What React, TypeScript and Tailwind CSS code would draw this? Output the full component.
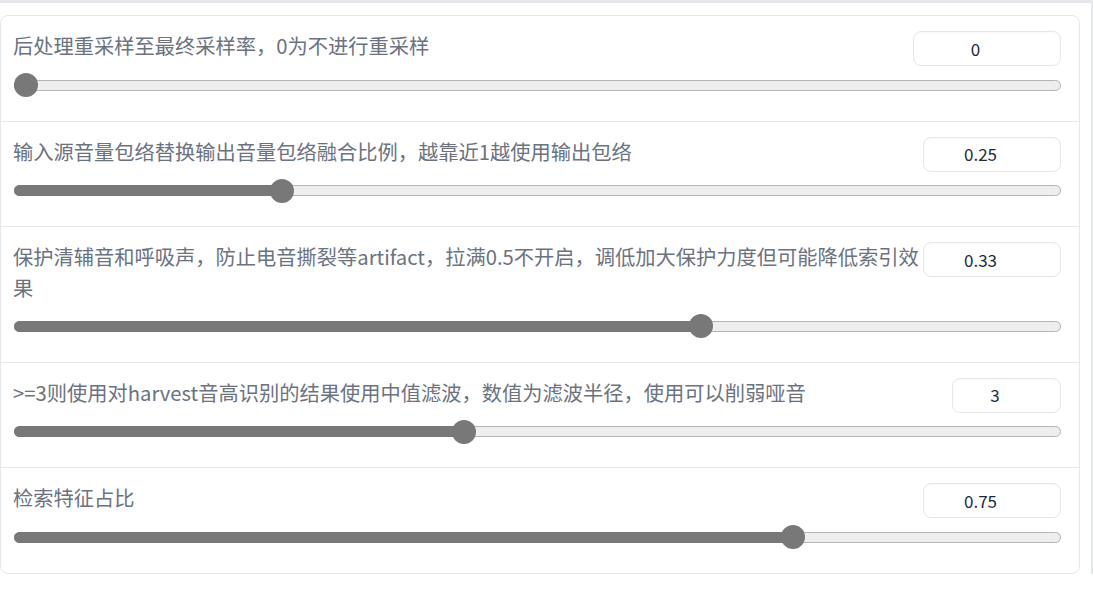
import React from "react";

type Param = {
  label: string;
  value: string;
  frac: number;
  inputW: string;
};

const params: Param[] = [
  { label: "后处理重采样至最终采样率，0为不进行重采样", value: "0", frac: 0, inputW: "w-[148px]" },
  { label: "输入源音量包络替换输出音量包络融合比例，越靠近1越使用输出包络", value: "0.25", frac: 0.25, inputW: "w-[138px]" },
  {
    label: "保护清辅音和呼吸声，防止电音撕裂等artifact，拉满0.5不开启，调低加大保护力度但可能降低索引效果",
    value: "0.33",
    frac: 0.66,
    inputW: "w-[138px]",
  },
  { label: ">=3则使用对harvest音高识别的结果使用中值滤波，数值为滤波半径，使用可以削弱哑音", value: "3", frac: 3 / 7, inputW: "w-[109px]" },
  { label: "检索特征占比", value: "0.75", frac: 0.75, inputW: "w-[138px]" },
];

const Slider: React.FC<{ frac: number }> = ({ frac }) => {
  // thumb center travels from 12px to (width - 12px)
  const left = `calc(12px + (100% - 24px) * ${frac})`;
  return (
    <div className="relative h-[24px] w-full">
      <div className="absolute left-0 right-0 top-[6.5px] h-[11px] rounded-full border border-[#b4b4b4] bg-[#eeeeee]" />
      <div
        className="absolute left-0 top-[6.5px] h-[11px] rounded-l-full bg-[#787878]"
        style={{ width: left }}
      />
      <div
        className="absolute top-0 h-[24px] w-[24px] -translate-x-1/2 rounded-full bg-[#787878]"
        style={{ left }}
      />
    </div>
  );
};

export default function App() {
  return (
    <div
      className="relative h-[592px] w-[1093px] overflow-hidden bg-white"
      style={{ fontFamily: '"Noto Sans CJK SC", "Noto Sans", sans-serif' }}
    >
      <div className="h-[3px] w-full bg-[#e5e7eb]" />
      <div className="flex">
        <div className="mt-[12px] w-[1080px] rounded-lg border border-[#e5e7eb] bg-white">
          {params.map((p, i) => (
            <div
              key={i}
              className={`pl-[12px] pr-[18px] pt-[14px] pb-[23.5px] ${
                i < params.length - 1 ? "border-b border-[#e5e7eb]" : ""
              }`}
            >
              <div className="flex items-start justify-between">
                <p className="flex-1 pb-[4px] text-[20.25px] leading-[31px] text-[#6b7280]">{p.label}</p>
                <div
                  className={`${p.inputW} mt-[1px] flex h-[35px] shrink-0 items-center justify-center rounded-lg border border-[#e5e7eb] bg-white pr-[23px] text-[17px] text-[#1e293b] shadow-[inset_0_1px_2px_rgba(0,0,0,0.03)]`}
                >
                  {p.value}
                </div>
              </div>
              <div className="mt-[7px] pl-[1px]">
                <Slider frac={p.frac} />
              </div>
            </div>
          ))}
        </div>
        <div className="flex-1" />
        <div className="w-[2px] self-stretch bg-[#e5e7eb]" />
      </div>
    </div>
  );
}
